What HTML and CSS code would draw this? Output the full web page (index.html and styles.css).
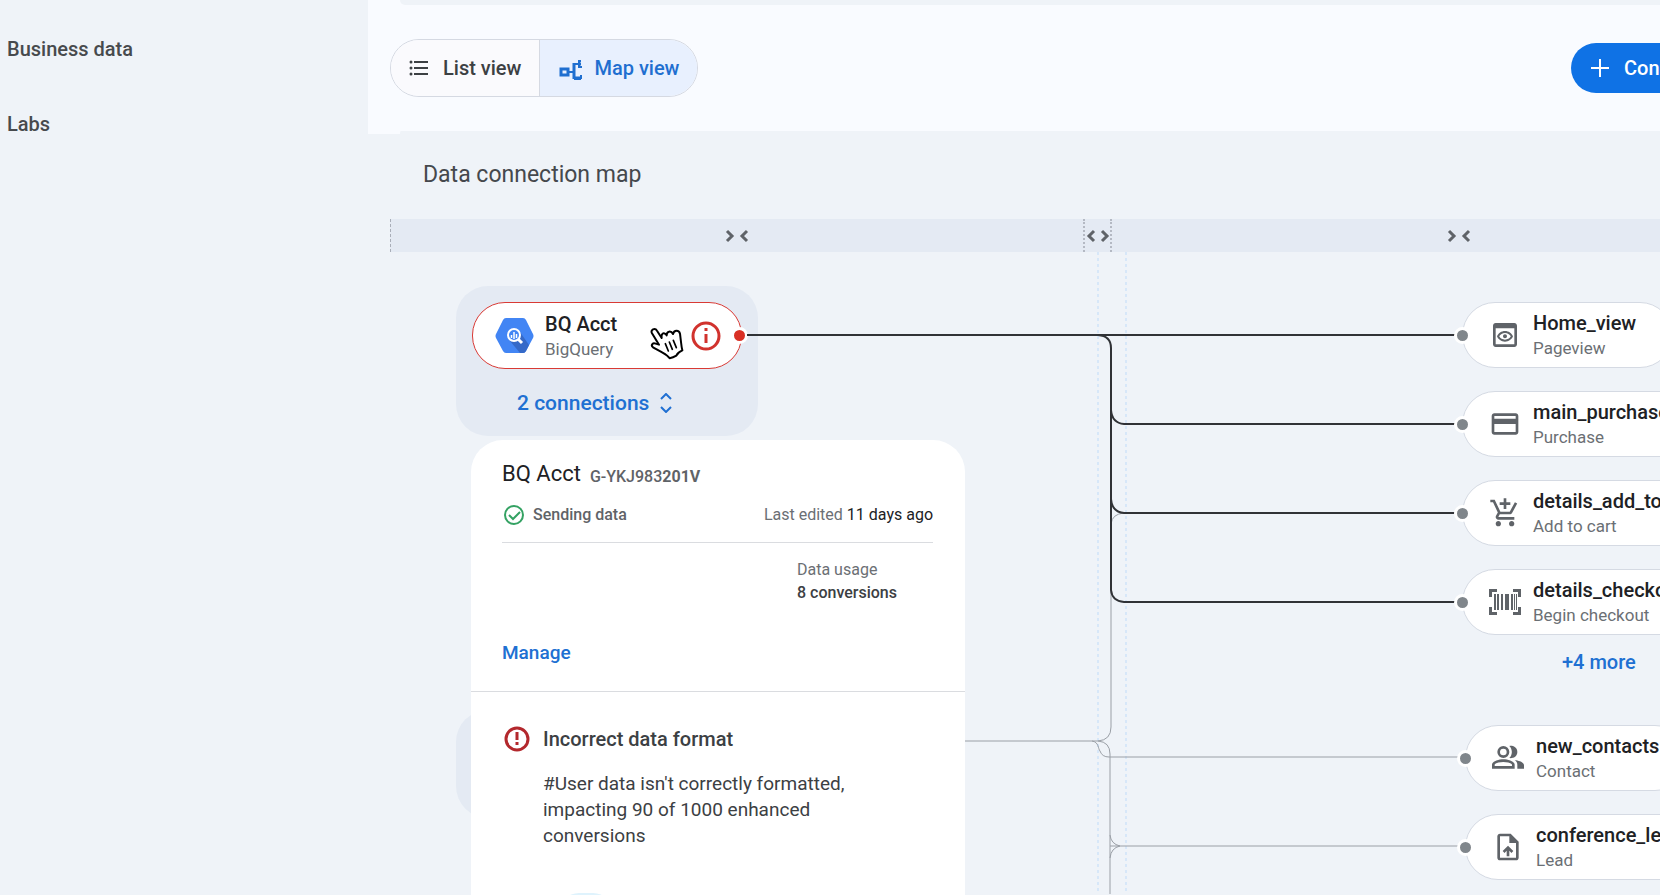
FILE: index.html
```
<!DOCTYPE html>
<html lang="en">
<head>
    <meta charset="UTF-8">
    <meta name="viewport" content="width=device-width, initial-scale=1.0">
    <title>Data connection map</title>
    <link rel="stylesheet" href="styles.css">
</head>
<body>
    <nav class="sidebar">
        <a href="#business-data">Business data</a>
        <a href="#labs">Labs</a>
    </nav>

    <main class="content">
        <div class="top-panel"></div>

        <div class="toolbar">
            <div class="view-toggle">
                <button type="button" class="view-button">
                    <svg class="list-icon" width="20" height="18" viewBox="0 0 20 18" fill="none" stroke="currentColor" stroke-width="2">
                        <path d="M5 3h14M5 9h14M5 15h14"/>
                        <path stroke-width="3" stroke-linecap="round" d="M2 3h0M2 9h0M2 15h0"/>
                    </svg>
                    List view
                </button>
                <button type="button" class="view-button active" aria-pressed="true">
                    <svg class="map-icon" width="24" height="22" viewBox="0 0 24 22" fill="none" stroke="currentColor">
                        <path stroke-width="3" d="M2 9h7v6H2zM15 3v16"/>
                        <path stroke-width="2" d="M9 12h6M15 4h5M15 19h7M22 1h-2v6h3M22 15v4"/>
                        <path stroke-width="3" d="M19 4h3M16 18h5"/>
                    </svg>
                    Map view
                </button>
            </div>
            <button type="button" class="connect-button">
                <svg width="18" height="18" viewBox="0 0 18 18" stroke="currentColor" stroke-width="2"><path d="M9 0v18M0 9h18"/></svg>
                Connect
            </button>
        </div>

        <section class="map-panel">
            <h1>Data connection map</h1>

            <div class="column-bar">
                <button type="button" class="column-button" aria-label="Collapse sources">
                    <svg width="24" height="14" viewBox="0 0 24 14"><path d="M2 2l5 5-5 5M22 2l-5 5 5 5"/></svg>
                </button>
                <button type="button" class="column-button narrow" aria-label="Expand middle column">
                    <svg width="24" height="14" viewBox="0 0 24 14"><path d="M8 2L3 7l5 5M16 2l5 5-5 5"/></svg>
                </button>
                <button type="button" class="column-button" aria-label="Collapse conversions">
                    <svg width="24" height="14" viewBox="0 0 24 14"><path d="M2 2l5 5-5 5M22 2l-5 5 5 5"/></svg>
                </button>
            </div>

            <div class="map">
                <!-- Sources -->
                <div class="source-group">
                    <button type="button" class="node source-node">
                        <svg class="bq-icon" width="39" height="36" viewBox="0 0 39 36">
                            <path fill="#4285f4" d="M11 0h17q2 0 3 2l7 14q1 2 0 4l-7 13q-1 2-3 2H11q-2 0-3-2L1 20q-1-2 0-4L8 2q1-2 3-2z"/>
                            <path fill="#3569c8" d="M25 14l9 13-3 6q-1 2-3 2h-3L15 23z"/>
                            <circle cx="19" cy="17" r="6" fill="#4285f4" stroke="#fff" stroke-width="2"/>
                            <path stroke="#fff" stroke-width="1.500" d="M16.500 17v3M19 14v7M21.500 16v4"/>
                            <path stroke="#fff" stroke-width="3" d="M23 21l4 4"/>
                        </svg>
                        <span class="node-text">
                            <span class="node-name">BQ Acct</span>
                            <span class="node-type">BigQuery</span>
                        </span>
                        <svg class="info-icon" width="30" height="30" viewBox="0 0 30 30" fill="none" stroke="currentColor" stroke-width="3">
                            <circle cx="15" cy="15" r="13"/>
                            <path d="M15 13v9M15 7v3"/>
                        </svg>
                        <span class="dot"></span>
                    </button>
                    <button type="button" class="link-button">
                        2 connections
                        <svg width="12" height="20" viewBox="0 0 12 20" fill="none" stroke="currentColor" stroke-width="2"><path d="M1 6l5-5 5 5M1 14l5 5 5-5"/></svg>
                    </button>
                </div>
                <div class="source-group next-group"></div>

                <!-- Connection lines -->
                <svg class="lines" width="1292" height="642" viewBox="0 0 1292 642" fill="none">
                    <g class="guides">
                        <path d="M730 0V642M758 0V642"/>
                    </g>
                    <g class="idle">
                        <path d="M500 489H730Q743 488 743 475V272Q744 262 756 261"/>
                        <path d="M730 489Q742 490 742 502V642"/>
                        <path d="M724 489C731 490 730 497 732 499Q734 505 741 505H1097"/>
                        <path d="M742 583Q743 592 752 594Q743 596 742 606M742 594H1097"/>
                    </g>
                    <g class="active-lines">
                        <path d="M379 83H1094"/>
                        <path d="M730 83Q743 84 743 96V338Q744 349 756 350H1095"/>
                        <path d="M743 158Q744 171 756 172H1094M743 247Q744 260 756 261H1095"/>
                    </g>
                </svg>

                <!-- Details of the selected source -->
                <div class="details">
                    <div class="details-main">
                        <div class="details-title">
                            <h2>BQ Acct</h2>
                            <span class="account-id">G-YKJ983<b>201V</b></span>
                        </div>
                        <div class="status-row">
                            <svg width="20" height="20" viewBox="0 0 20 20" fill="none" stroke="#34a263" stroke-width="2">
                                <circle cx="10" cy="10" r="9"/>
                                <path d="M5 10l4 4 7-7"/>
                            </svg>
                            <span class="status">Sending data</span>
                            <span class="edited">Last edited <span class="dark">11 days ago</span></span>
                        </div>
                        <dl class="usage">
                            <dt>Data usage</dt>
                            <dd>8 conversions</dd>
                        </dl>
                        <a class="manage" href="#manage">Manage</a>
                    </div>
                    <div class="issue">
                        <svg width="26" height="26" viewBox="0 0 26 26" fill="none" stroke="#b3282d" stroke-width="3">
                            <circle cx="13" cy="13" r="11"/>
                            <path d="M13 6v8M13 16v3"/>
                        </svg>
                        <div>
                            <h3>Incorrect data format</h3>
                            <p>#User data isn't correctly formatted, impacting 90 of 1000 enhanced conversions</p>
                            <div class="issue-art"></div>
                        </div>
                    </div>
                </div>

                <!-- Conversions -->
                <div class="targets">
                    <button type="button" class="node">
                        <svg class="node-icon" viewBox="0 0 24 24"><path d="M19 3H5c-1.100 0-2 .9-2 2v14c0 1.100.9 2 2 2h14c1.100 0 2-.9 2-2V5c0-1.100-.9-2-2-2zm0 16H5V7h14v12zm-7-8.500c1.840 0 3.480.96 4.340 2.500-.86 1.540-2.500 2.500-4.340 2.500S8.520 14.540 7.660 13c.86-1.540 2.500-2.500 4.340-2.500M12 9c-2.730 0-5.060 1.660-6 4 .94 2.340 3.270 4 6 4s5.060-1.660 6-4c-.94-2.340-3.270-4-6-4zm0 5.500c-.83 0-1.500-.67-1.500-1.500s.67-1.500 1.500-1.500 1.500.67 1.500 1.500-.67 1.500-1.500 1.500z"/></svg>
                        <span class="node-text">
                            <span class="node-name">Home_view</span>
                            <span class="node-type">Pageview</span>
                        </span>
                        <span class="dot"></span>
                    </button>
                    <button type="button" class="node">
                        <svg class="node-icon" viewBox="0 0 24 24"><path d="M20 4H4c-1.110 0-1.990.89-1.990 2L2 18c0 1.110.89 2 2 2h16c1.110 0 2-.89 2-2V6c0-1.110-.89-2-2-2zm0 14H4v-6h16v6zm0-10H4V6h16v2z"/></svg>
                        <span class="node-text">
                            <span class="node-name">main_purchase</span>
                            <span class="node-type">Purchase</span>
                        </span>
                        <span class="dot"></span>
                    </button>
                    <button type="button" class="node">
                        <svg class="node-icon" viewBox="0 0 24 24"><path d="M11 9h2V6h3V4h-3V1h-2v3H8v2h3v3zm-4 9c-1.100 0-1.990.9-1.990 2S5.900 22 7 22s2-.9 2-2-.9-2-2-2zm10 0c-1.100 0-1.990.9-1.990 2s.89 2 1.990 2 2-.9 2-2-.9-2-2-2zm-8.900-5h7.450c.75 0 1.410-.41 1.750-1.030L21.160 4.960 19.420 4l-3.870 7H8.530L4.270 2H1v2h2l3.600 7.590-1.350 2.440C4.520 15.370 5.480 17 7 17h12v-2H7l1.100-2z"/></svg>
                        <span class="node-text">
                            <span class="node-name">details_add_to_cart</span>
                            <span class="node-type">Add to cart</span>
                        </span>
                        <span class="dot"></span>
                    </button>
                    <button type="button" class="node">
                        <svg class="node-icon" viewBox="0 0 32 26"><path d="M0 0h8v3H3v5H0zM24 0h8v8h-3V3h-5zM0 18h3v5h5v3H0zM29 18h3v8h-8v-3h5zM5 5h2v16H5zM8 5h2v16H8zM12 5h2v16h-2zM16 5h4v16h-4zM22 5h2v16h-2zM25 5h1v16h-1zM27 5h1v16h-1z"/></svg>
                        <span class="node-text">
                            <span class="node-name">details_checkout</span>
                            <span class="node-type">Begin checkout</span>
                        </span>
                        <span class="dot"></span>
                    </button>
                    <button type="button" class="link-button more">+4 more</button>
                    <button type="button" class="node">
                        <svg class="node-icon" viewBox="0 0 24 20"><path fill-rule="evenodd" d="M8.500 10a4.500 4.500 0 1 0 0-9 4.500 4.500 0 0 0 0 9zm0-2a2.500 2.500 0 1 1 0-5 2.500 2.500 0 0 1 0 5zM0 18v-3c0-2.500 5-4 8.500-4s8.500 1.500 8.500 4v3zm2-2h13v-1c0-1-3.500-2-6.500-2S2 14 2 15zM13 10c2 .5 6-.5 6-4.500S15 .5 13 1c2.500 2.500 2.500 6.500 0 9zM17 11.500c3 .5 7 1.500 7 4V18h-5v-3c0-1.500-.8-2.600-2-3.500z"/></svg>
                        <span class="node-text">
                            <span class="node-name">new_contacts</span>
                            <span class="node-type">Contact</span>
                        </span>
                        <span class="dot"></span>
                    </button>
                    <button type="button" class="node">
                        <svg class="node-icon" viewBox="0 0 24 24"><path d="M14 2H6c-1.100 0-1.990.9-1.990 2L4 20c0 1.100.89 2 1.990 2H18c1.100 0 2-.9 2-2V8l-6-6zm4 18H6V4h7v5h5v11zM8 15.010l1.410 1.410L11 14.840V19h2v-4.160l1.590 1.590L16 15.010 12.010 11z"/></svg>
                        <span class="node-text">
                            <span class="node-name">conference_lead</span>
                            <span class="node-type">Lead</span>
                        </span>
                        <span class="dot"></span>
                    </button>
                </div>

                <svg class="pointer" width="36" height="34" viewBox="0 0 108 102" fill="#fff" stroke="#000" stroke-width="6" stroke-linejoin="round" stroke-linecap="round">
                    <path d="M9 19C3 8 18 1 24 11L38 33C36 18 46 14 53 25C53 12 66 10 72 21C75 8 90 8 93 20L96 45C97 54 98 62 100 70Q86 76 82 86Q72 92 62 94C56 84 46 80 34 73L12 61C4 54 12 46 20 50L30 53Z"/>
                    <path fill="none" stroke-width="5" d="M49 50l9 22M61 45l9 22M73 40l9 22"/>
                </svg>
            </div>
        </section>
    </main>
</body>
</html>
```

FILE: styles.css
```
* {
    box-sizing: border-box;
}

body {
    display: flex;
    height: 100vh;
    margin: 0;
    overflow: hidden;
    font-family: Roboto, Arial, sans-serif;
    font-size: 16px;
    color: #202124;
    background-color: #eff3f8;
}

button {
    padding: 0;
    border: none;
    background: none;
    font: inherit;
    color: inherit;
    cursor: pointer;
}

a {
    text-decoration: none;
}

h1, h2, h3, p, dl, dd {
    margin: 0;
}

svg {
    flex: none;
}

/* Left navigation */
.sidebar {
    display: flex;
    flex: none;
    flex-direction: column;
    gap: 51px;
    width: 368px;
    padding: 37px 7px;
}

.sidebar a {
    font-size: 20px;
    font-weight: 500;
    line-height: 24px;
    color: #474a4d;
}

.content {
    display: flex;
    flex: 1;
    flex-direction: column;
    min-width: 0;
    overflow: hidden;
    background: linear-gradient(#f9fbff 134px, #eff3f8 134px);
}

.top-panel {
    flex: none;
    height: 5px;
    margin-left: 32px;
    border-radius: 0 0 0 24px;
    background-color: #eff3f8;
}

/* View switch and connect button */
.toolbar {
    display: flex;
    flex: none;
    align-items: center;
    justify-content: space-between;
    height: 126px;
    padding-left: 22px;
}

.view-toggle {
    display: flex;
    height: 58px;
    overflow: hidden;
    border: 1px solid #d5d9e2;
    border-radius: 29px;
}

.view-button {
    display: flex;
    align-items: center;
    gap: 14px;
    padding: 0 18px;
    font-size: 20px;
    font-weight: 500;
    color: #3c4043;
    background-color: #fafafd;
}

.view-button.active {
    gap: 11px;
    padding: 0 18px 0 19px;
    border-left: 1px solid #d5d9e2;
    color: #1f6fd0;
    background-color: #e8f0fe;
}

.map-icon {
    margin-top: 6px;
}

.connect-button {
    display: flex;
    flex: none;
    align-items: center;
    gap: 15px;
    width: 180px;
    height: 50px;
    margin-right: -91px;
    padding-left: 20px;
    border-radius: 25px;
    font-size: 20px;
    font-weight: 500;
    color: #fff;
    background-color: #0f72e5;
}

/* Map panel */
.map-panel {
    display: flex;
    flex: 1;
    flex-direction: column;
    min-height: 0;
    padding-left: 22px;
    background: radial-gradient(circle at 100% 100%, #eff3f8 24px, #f9fbff 25px) 32px 0 / 24px 7px no-repeat, linear-gradient(#eff3f8, #eff3f8) 56px 0 no-repeat;
}

h1 {
    padding: 30px 33px;
    font-size: 23px;
    font-weight: 400;
    line-height: 28px;
    color: #45484d;
}

.column-bar {
    display: grid;
    flex: none;
    grid-template-columns: 693px 29px 694px;
    height: 33px;
    background-color: #e4eaf3;
}

.column-button {
    display: flex;
    align-items: center;
    justify-content: center;
    border-left: 1px dashed #a9aeb8;
}

.column-button + .column-button {
    border-left: none;
}

.column-button.narrow,
.column-button.narrow:not(:first-child) {
    border-right: 2px dotted #b4b9c3;
    border-left: 2px dotted #b4b9c3;
}

.column-button path {
    fill: none;
    stroke: #5f6368;
    stroke-width: 3;
}

.map {
    position: relative;
    flex: 1;
    min-height: 0;
}

.lines {
    position: absolute;
    top: 0;
    left: -22px;
}

.guides {
    stroke: #bfdbf9;
    stroke-dasharray: 3 3;
}

.idle {
    stroke: #9a9fa6;
}

.active-lines {
    stroke: #303236;
    stroke-width: 2;
}

/* Nodes */
.source-group {
    position: absolute;
    top: 34px;
    left: 66px;
    display: flex;
    flex-direction: column;
    width: 302px;
    height: 150px;
    padding: 16px;
    border-radius: 32px;
    background-color: #e4eaf3;
}

.next-group {
    top: 458px;
    height: 108px;
}

.node {
    position: relative;
    display: flex;
    flex: none;
    align-items: center;
    height: 66px;
    padding: 0 28px 0 26px;
    border: 1px solid #d5dae3;
    border-radius: 33px;
    text-align: left;
    background-color: #fff;
}

.source-node {
    width: 270px;
    height: 67px;
    padding: 0 20px 0 22px;
    border-color: #d93a35;
}

.node-icon {
    width: 32px;
    height: 32px;
    margin-right: 12px;
    fill: #5f6368;
}

.bq-icon {
    margin-right: 11px;
}

.info-icon {
    margin-left: auto;
    color: #d1322d;
}

.node-text {
    display: flex;
    flex-direction: column;
    white-space: nowrap;
}

.node-name {
    font-size: 20px;
    font-weight: 500;
    line-height: 26px;
    color: #202124;
}

.node-type {
    font-size: 17px;
    line-height: 24px;
    color: #6b6f74;
}

.dot {
    position: absolute;
    top: 24px;
    left: -9px;
    width: 17px;
    height: 17px;
    border: 3px solid #fff;
    border-radius: 50%;
    background-color: #80868b;
}

.source-node .dot {
    right: -7px;
    left: auto;
    background-color: #d93025;
}

.link-button {
    display: flex;
    align-items: center;
    gap: 11px;
    padding: 23px 45px;
    font-size: 21px;
    font-weight: 500;
    line-height: 22px;
    white-space: nowrap;
    color: #2070d2;
}

.targets {
    position: absolute;
    top: 50px;
    left: 1072px;
    display: flex;
    flex-direction: column;
    align-items: flex-start;
    gap: 23px;
}

.targets .node {
    min-width: 211px;
}

.targets .more {
    margin-top: -8px;
    padding: 0 100px;
    font-size: 20px;
    line-height: 24px;
}

.more + .node {
    margin-top: 28px;
}

.more ~ .node {
    margin-left: 3px;
}

/* Details card */
.details {
    position: absolute;
    top: 188px;
    bottom: 0;
    left: 81px;
    width: 494px;
    overflow: hidden;
    border-radius: 32px 32px 0 0;
    background-color: #fff;
}

.details-main {
    padding: 20px 32px 25px 31px;
    border-bottom: 1px solid #dadce0;
}

.details-title {
    display: flex;
    align-items: flex-end;
    gap: 9px;
}

.details-title h2 {
    font-size: 22px;
    font-weight: 400;
    line-height: 28px;
}

.account-id {
    line-height: 22px;
    font-weight: 500;
    color: #5f6368;
}

.status-row {
    display: flex;
    align-items: center;
    gap: 9px;
    padding: 15px 0 15px 2px;
    border-bottom: 1px solid #dadce0;
    line-height: 24px;
}

.status {
    font-weight: 500;
    color: #5f6368;
}

.edited {
    margin-left: auto;
    color: #6b6f74;
}

.dark {
    color: #202124;
}

.usage {
    margin-left: 295px;
    padding: 15px 0 36px;
    line-height: 23px;
    color: #6b6f74;
}

.usage dd {
    font-weight: 500;
    color: #3c4043;
}

.manage {
    display: inline-block;
    font-size: 19px;
    font-weight: 500;
    line-height: 26px;
    color: #2070d2;
}

.issue {
    display: flex;
    gap: 13px;
    padding: 34px 100px 0 33px;
    color: #3c4043;
}

.issue h3 {
    margin-bottom: 19px;
    font-size: 20px;
    font-weight: 500;
    line-height: 26px;
}

.issue p {
    font-size: 19px;
    line-height: 26px;
}

.issue-art {
    width: 54px;
    height: 54px;
    margin: 44px 0 0 16px;
    border-radius: 20px;
    background-color: #dff3fd;
}

.pointer {
    position: absolute;
    top: 75px;
    left: 259px;
    pointer-events: none;
}
```
